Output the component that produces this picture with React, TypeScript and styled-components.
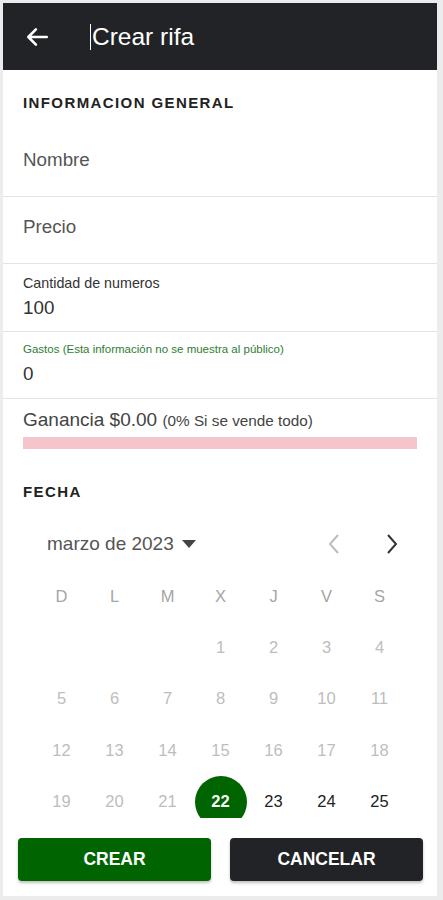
import styled, { createGlobalStyle } from "styled-components";

const WEEKDAYS = ["D", "L", "M", "X", "J", "V", "S"];
const FIRST_WEEKDAY = 3; // 1 de marzo 2023 cae en miércoles
const DAYS_SHOWN = 25;
const SELECTED_DAY = 22;

const GlobalStyle = createGlobalStyle`
	html, body {
		margin: 0;
		padding: 0;
		background: #ececec;
	}
	* {
		box-sizing: border-box;
	}
	body {
		font-family: "Liberation Sans", Arial, sans-serif;
	}
`;

export default function App() {
	const cells: (number | null)[] = [
		...Array.from({ length: FIRST_WEEKDAY }, () => null),
		...Array.from({ length: DAYS_SHOWN }, (_, i) => i + 1),
	];

	return (
		<>
			<GlobalStyle />
			<Frame>
				<Panel>
					<Header>
						<BackButton aria-label="Volver">
							<svg width="26" height="26" viewBox="0 0 24 24" fill="none">
								<path
									d="M21 12H4M11 5l-7 7 7 7"
									stroke="#fff"
									strokeWidth="2.4"
									strokeLinecap="round"
									strokeLinejoin="round"
								/>
							</svg>
						</BackButton>
						<Title>
							<Caret />
							Crear rifa
						</Title>
					</Header>

					<Scroll>
						<SectionTitle $bottom={17}>INFORMACION GENERAL</SectionTitle>

						<Field $height={69} $top={22}>
							<Value $muted>Nombre</Value>
						</Field>
						<Field $height={67} $top={20}>
							<Value $muted>Precio</Value>
						</Field>
						<Field $height={68} $top={12}>
							<Label>Cantidad de numeros</Label>
							<Value>100</Value>
						</Field>
						<Field $height={67} $top={11}>
							<Label $green>Gastos (Esta información no se muestra al público)</Label>
							<Value>0</Value>
						</Field>

						<Profit>
							<ProfitText>
								Ganancia $0.00 <small>(0% Si se vende todo)</small>
							</ProfitText>
							<ProfitBar />
						</Profit>

						<SectionTitle $top={34}>FECHA</SectionTitle>

						<Calendar>
							<CalendarHeader>
								<MonthPicker>
									marzo de 2023
									<svg width="14" height="9" viewBox="0 0 14 9">
										<path d="M0 0h14L7 8z" fill="#444" />
									</svg>
								</MonthPicker>
								<NavGroup>
									<NavButton aria-label="Mes anterior">
										<svg width="14" height="22" viewBox="0 0 14 22" fill="none">
											<path d="M11 2L3 11l8 9" stroke="#bdbdbd" strokeWidth="2" />
										</svg>
									</NavButton>
									<NavButton aria-label="Mes siguiente">
										<svg width="14" height="22" viewBox="0 0 14 22" fill="none">
											<path d="M3 2l8 9-8 9" stroke="#333" strokeWidth="2" />
										</svg>
									</NavButton>
								</NavGroup>
							</CalendarHeader>

							<WeekRow>
								{WEEKDAYS.map((d) => (
									<WeekDay key={d}>{d}</WeekDay>
								))}
							</WeekRow>

							<DaysGrid>
								{cells.map((day, i) =>
									day === null ? (
										<span key={`e${i}`} />
									) : (
										<Day
											key={day}
											$disabled={day < SELECTED_DAY}
											$selected={day === SELECTED_DAY}
										>
											{day}
										</Day>
									),
								)}
							</DaysGrid>
						</Calendar>
					</Scroll>

					<Footer>
						<ActionButton $variant="primary">CREAR</ActionButton>
						<ActionButton $variant="dark">CANCELAR</ActionButton>
					</Footer>
				</Panel>
			</Frame>
		</>
	);
}

const Frame = styled.div`
	height: 900px;
	padding: 3px 6px 4px 3px;
	background: #ececec;
`;

const Panel = styled.div`
	height: 100%;
	display: flex;
	flex-direction: column;
	background: #fff;
`;

const Header = styled.header`
	flex: 0 0 67px;
	display: flex;
	align-items: center;
	background: #222326;
	padding-left: 21px;
`;

const BackButton = styled.button`
	display: flex;
	padding: 0;
	border: none;
	background: none;
	cursor: pointer;
`;

const Title = styled.h1`
	display: flex;
	align-items: center;
	margin: 0 0 0 40px;
	font-size: 24.5px;
	font-weight: 400;
	color: #fff;
`;

const Caret = styled.span`
	width: 1px;
	height: 26px;
	margin-right: 1px;
	background: #fff;
`;

const Scroll = styled.main`
	flex: 1;
	overflow: hidden;
`;

const SectionTitle = styled.h2<{ $top?: number; $bottom?: number }>`
	margin: 0;
	padding: ${(p) => p.$top ?? 24}px 20px ${(p) => p.$bottom ?? 15}px;
	font-size: 15px;
	line-height: 17px;
	font-weight: 700;
	letter-spacing: 1.4px;
	color: #222;
`;

const Field = styled.div<{ $height: number; $top: number }>`
	height: ${(p) => p.$height}px;
	padding: ${(p) => p.$top}px 20px 0;
	border-bottom: 1px solid #e3e3e3;
`;

const Label = styled.div<{ $green?: boolean }>`
	margin-bottom: ${(p) => (p.$green ? 9 : 8)}px;
	font-size: ${(p) => (p.$green ? 11.5 : 14.3)}px;
	line-height: ${(p) => (p.$green ? 12 : 14)}px;
	color: ${(p) => (p.$green ? "#2e7d32" : "#333")};
`;

const Value = styled.div<{ $muted?: boolean }>`
	font-size: 18.8px;
	line-height: 19px;
	color: ${(p) => (p.$muted ? "#555" : "#333")};
`;

const Profit = styled.div`
	padding: 11px 20px 0;
`;

const ProfitText = styled.div`
	font-size: 19px;
	line-height: 20px;
	color: #444;

	small {
		font-size: 15.3px;
		color: #444;
	}
`;

const ProfitBar = styled.div`
	height: 12px;
	margin-top: 6px;
	background: #f4c6cb;
`;

const Calendar = styled.div`
	padding: 0 30px 0 32px;
`;

const CalendarHeader = styled.div`
	display: flex;
	justify-content: space-between;
	align-items: center;
	height: 44px;
	margin-top: 7px;
`;

const MonthPicker = styled.div`
	display: flex;
	align-items: center;
	gap: 8px;
	padding-left: 12px;
	font-size: 19px;
	color: #555;
`;

const NavGroup = styled.div`
	display: flex;
	gap: 44px;
	padding-right: 8px;
`;

const NavButton = styled.button`
	display: flex;
	padding: 0;
	border: none;
	background: none;
	cursor: pointer;
`;

const WeekRow = styled.div`
	display: grid;
	grid-template-columns: repeat(7, 53px);
	height: 52px;
	margin-top: 4px;
	align-items: center;
`;

const WeekDay = styled.span`
	text-align: center;
	font-size: 16.5px;
	color: #a5a5a5;
`;

const DaysGrid = styled.div`
	display: grid;
	grid-template-columns: repeat(7, 53px);
	grid-auto-rows: 51.3px;
`;

const Day = styled.span<{ $disabled: boolean; $selected: boolean }>`
	display: flex;
	align-items: center;
	justify-content: center;
	width: 52px;
	height: 52px;
	justify-self: center;
	align-self: center;
	border-radius: 50%;
	font-size: 16.5px;
	font-weight: ${(p) => (p.$selected ? 700 : 400)};
	color: ${(p) => (p.$selected ? "#fff" : p.$disabled ? "#bdbdbd" : "#222")};
	background: ${(p) => (p.$selected ? "#006400" : "transparent")};
`;

const Footer = styled.footer`
	display: flex;
	gap: 19px;
	padding: 20px 14px 15px 15px;
`;

const ActionButton = styled.button<{ $variant: "primary" | "dark" }>`
	flex: 1;
	height: 43px;
	border: none;
	border-radius: 4px;
	font-family: "Liberation Sans", Arial, sans-serif;
	font-size: 17.5px;
	font-weight: 700;
	color: #fff;
	background: ${(p) => (p.$variant === "primary" ? "#006400" : "#222326")};
	box-shadow: 0 2px 3px rgba(0, 0, 0, 0.25);
	cursor: pointer;
`;
